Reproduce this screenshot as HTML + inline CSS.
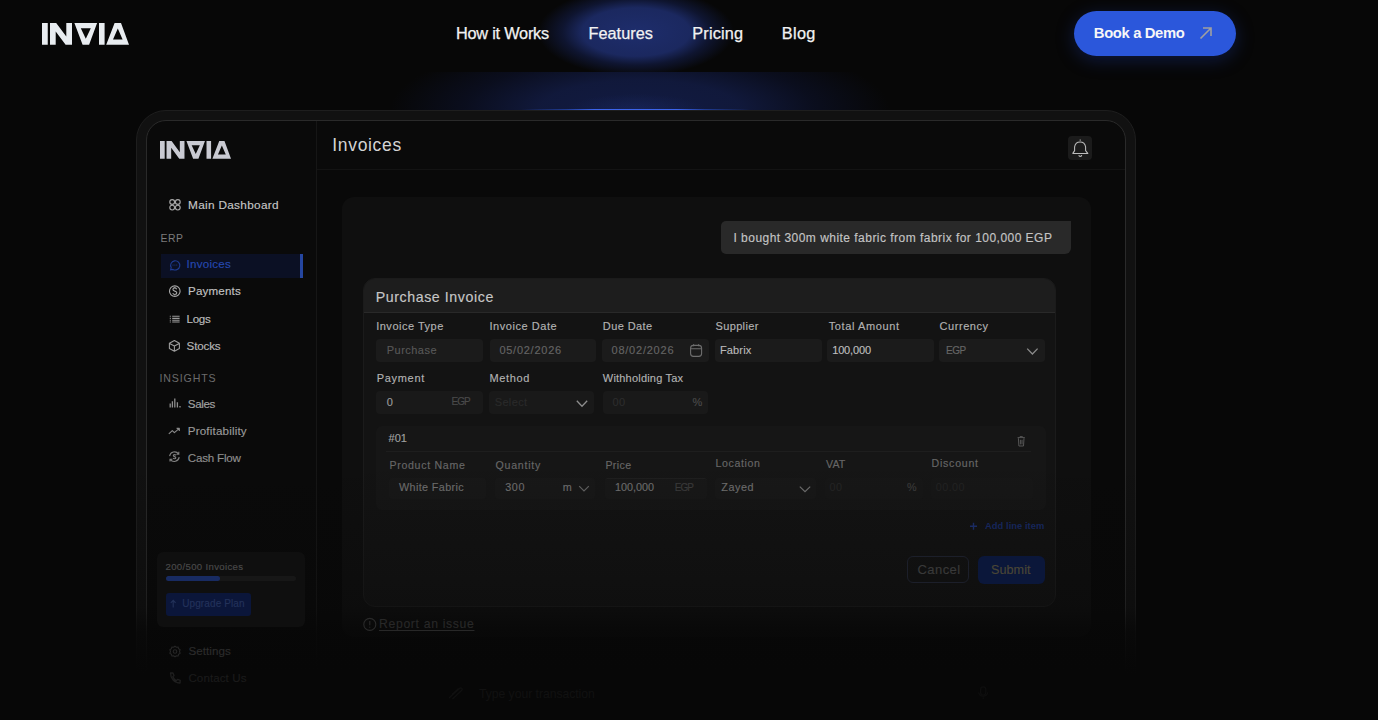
<!DOCTYPE html>
<html><head><meta charset="utf-8"><style>
html,body{margin:0;padding:0;}
body{width:1378px;height:720px;overflow:hidden;background:#070707;position:relative;font-family:"Liberation Sans", sans-serif;}
.a{position:absolute;box-sizing:border-box;}
.t{position:absolute;white-space:nowrap;-webkit-text-stroke:0.15px currentColor;}
svg{position:absolute;overflow:visible;}
</style></head><body>
<!-- glows -->
<div class="a" style="left:0;top:72px;width:1378px;height:38px;background:radial-gradient(ellipse 70px 16px at 636px 38px, rgba(45,70,170,0.18) 0%, rgba(45,70,170,0) 100%), radial-gradient(ellipse 250px 75px at 640px 38px, rgba(19,29,72,0.9) 0%, rgba(19,29,72,0.8) 40%, rgba(13,19,48,0.55) 70%, rgba(7,7,7,0) 100%);"></div>
<div class="a" style="left:0;top:0;width:1378px;height:72px;background:radial-gradient(ellipse 98px 44px at 636px 32px, rgba(30,45,108,1) 0%, rgba(28,42,100,0.95) 55%, rgba(18,27,66,0.7) 75%, rgba(7,7,7,0) 100%);"></div>
<div class="a" style="left:521px;top:109px;width:229px;height:2px;background:linear-gradient(to right, rgba(43,87,219,0), rgba(43,87,219,0.55) 20%, rgba(60,100,235,1) 32%, rgba(60,100,235,1) 68%, rgba(43,87,219,0.55) 80%, rgba(43,87,219,0));"></div>
<!-- logo -->
<svg style="left:42px;top:23px" width="87" height="22" viewBox="0 0 87 22"><path fill="#e8ecf0" fill-rule="evenodd" d="M0 0H5.75V21.8H0Z M8 0H14.2L24.3 13.6V0H30V21.8H23.6L13.7 8.4V21.8H8Z M32.4 0H55.1L47.1 21.8H40.6Z M38.8 5.2H48.8L43.8 15.8Z M57 0H62.6V21.8H57Z M72.6 0H79L87 21.8H64.2Z M75.8 5.6L71 16.4H80.6Z"/></svg>
<!-- button -->
<div class="a" style="left:1074px;top:11px;width:162px;height:45px;border-radius:23px;background:#2b57db;box-shadow:0 4px 18px rgba(30,60,170,0.35);"></div>
<svg style="left:1199px;top:26px" width="14" height="14" viewBox="0 0 14 14"><path d="M1.5 12.5L12 2M4 2H12V10" fill="none" stroke="#a0a0a0" stroke-width="1.6"/></svg>

<!-- frame -->
<div class="a" style="left:136px;top:110px;width:1000px;height:640px;border-radius:30px;background:#111111;border:1px solid #1e1e1e;"></div>
<div class="a" style="left:146px;top:120px;width:980px;height:620px;border-radius:20px;background:#0a0a0a;border:1px solid #2a2a2a;"></div>
<div class="a" style="left:316px;top:121px;width:1px;height:600px;background:#161616;"></div>
<div class="a" style="left:317px;top:169px;width:808px;height:1px;background:#131313;"></div>
<div class="a" style="left:317px;top:170px;width:808px;height:560px;background:#090909;"></div>
<!-- sidebar logo -->
<svg style="left:160px;top:141px" width="71" height="18" viewBox="0 0 87 22" preserveAspectRatio="none"><path fill="#c9cad2" fill-rule="evenodd" d="M0 0H5.75V21.8H0Z M8 0H14.2L24.3 13.6V0H30V21.8H23.6L13.7 8.4V21.8H8Z M32.4 0H55.1L47.1 21.8H40.6Z M38.8 5.2H48.8L43.8 15.8Z M57 0H62.6V21.8H57Z M72.6 0H79L87 21.8H64.2Z M75.8 5.6L71 16.4H80.6Z"/></svg>
<!-- active row -->
<div class="a" style="left:161px;top:254px;width:141px;height:24px;background:#0b1024;"></div>
<div class="a" style="left:300px;top:254px;width:2.5px;height:24px;background:#2546a0;"></div>
<!-- bell -->
<div class="a" style="left:1068px;top:135.5px;width:24px;height:24px;border-radius:4px;background:#1b1b1b;"></div>

<!-- main card -->
<div class="a" style="left:342px;top:197px;width:749px;height:440px;border-radius:12px;background:#0f0f0f;"></div>
<!-- chat -->
<div class="a" style="left:721px;top:220.5px;width:350px;height:33.5px;border-radius:5px 0 6px 5px;background:#292929;"></div>
<!-- purchase card -->
<div class="a" style="left:363px;top:278px;width:693px;height:329px;border-radius:12px;background:#131313;overflow:hidden;border:1px solid #1b1b1b;">
  <div class="a" style="left:0;top:0;width:693px;height:34px;background:#1d1d1d;border-bottom:1px solid #292929;"></div>
</div>
<!-- inputs row1 -->
<div class="a" style="left:376.3px;top:339.4px;width:107px;height:23px;border-radius:4px;background:#1b1b1b;"></div>
<div class="a" style="left:490px;top:339.4px;width:105.7px;height:23px;border-radius:4px;background:#1b1b1b;"></div>
<div class="a" style="left:602px;top:339.4px;width:106.5px;height:23px;border-radius:4px;background:#1b1b1b;"></div>
<div class="a" style="left:715.2px;top:339.4px;width:107px;height:23px;border-radius:4px;background:#1b1b1b;"></div>
<div class="a" style="left:827px;top:339.4px;width:106.5px;height:23px;border-radius:4px;background:#1b1b1b;"></div>
<div class="a" style="left:939px;top:339.4px;width:106px;height:23px;border-radius:4px;background:#1b1b1b;"></div>
<!-- inputs row2 -->
<div class="a" style="left:376.3px;top:390.8px;width:106.3px;height:23.2px;border-radius:4px;background:#191919;"></div>
<div class="a" style="left:488.6px;top:390.8px;width:105.4px;height:23.2px;border-radius:4px;background:#191919;"></div>
<div class="a" style="left:602.8px;top:390.8px;width:105.2px;height:23.2px;border-radius:4px;background:#191919;"></div>
<!-- line item -->
<div class="a" style="left:376.3px;top:426px;width:670px;height:84px;border-radius:6px;background:#161616;"></div>
<div class="a" style="left:386px;top:450.5px;width:645px;height:1px;background:#1e1e1e;"></div>
<div class="a" style="left:388.5px;top:478.3px;width:97.5px;height:21px;border-radius:3px;background:#181818;"></div>
<div class="a" style="left:494.7px;top:478.3px;width:100.2px;height:21px;border-radius:3px;background:#181818;"></div>
<div class="a" style="left:604.6px;top:478.3px;width:102px;height:21px;border-radius:3px;background:#181818;border-top:1px solid #1f1f1f;"></div>
<div class="a" style="left:715px;top:478.3px;width:101.2px;height:21px;border-radius:3px;background:#181818;"></div>
<div class="a" style="left:825.2px;top:478.3px;width:97.6px;height:21px;border-radius:3px;background:#171717;"></div>
<div class="a" style="left:930.6px;top:478.3px;width:102.7px;height:21px;border-radius:3px;background:#171717;"></div>
<!-- bottom input -->

<div class="a" style="left:0;top:0;width:1378px;height:720px;background:linear-gradient(to bottom, rgba(7,7,7,0) 0px, rgba(7,7,7,0) 460px, rgba(7,7,7,0.2) 560px, rgba(7,7,7,0.32) 607px, rgba(7,7,7,0.8) 632px, rgba(7,7,7,0.95) 660px, rgba(7,7,7,1) 674px);"></div>
<!-- usage card -->
<div class="a" style="left:157px;top:552px;width:148px;height:75px;border-radius:6px;background:#0f0f0f;"></div>
<div class="a" style="left:165.5px;top:575.5px;width:130px;height:5.5px;border-radius:3px;background:#171717;"></div>
<div class="a" style="left:165.5px;top:575.5px;width:54px;height:5.5px;border-radius:3px;background:#182b62;"></div>
<div class="a" style="left:165.5px;top:593px;width:85px;height:22.5px;border-radius:3px;background:#0b163a;"></div>

<!-- buttons -->
<div class="a" style="left:907.2px;top:555.8px;width:62.3px;height:27.4px;border-radius:6px;border:1px solid #1c1f2a;"></div>
<div class="a" style="left:977.5px;top:556.4px;width:67.4px;height:27.2px;border-radius:6px;background:#0b173a;"></div>
<!-- sidebar icons -->
<svg style="left:0;top:0" width="1" height="1">
 <g fill="none" stroke="#a8a8a8" stroke-width="1.15">
  <circle cx="172.2" cy="202" r="2.4"/><circle cx="177.8" cy="202" r="2.4"/>
  <circle cx="172.2" cy="207.6" r="2.4"/><circle cx="177.8" cy="207.6" r="2.4"/>
 </g>
 <g fill="none" stroke="#1f3c92" stroke-width="1.1">
  <path d="M170.6 269.8 L171.2 267.6 A4.6 4.6 0 1 1 173 269.4 Z"/>
 </g>
 <g fill="#1f3c92"><circle cx="173" cy="265" r="0.55"/><circle cx="174.9" cy="265" r="0.55"/><circle cx="176.8" cy="265" r="0.55"/></g>
 <g fill="none" stroke="#a8a8a8" stroke-width="1.1">
  <circle cx="174.8" cy="291.2" r="5.3"/>
  <path d="M176.7 289.2 C176.3 288.2 175.6 287.9 174.8 287.9 C173.6 287.9 172.9 288.6 172.9 289.5 C172.9 291.6 176.8 290.6 176.8 292.8 C176.8 293.8 176 294.5 174.8 294.5 C173.8 294.5 173.1 294.1 172.8 293.2 M174.8 286.9 V287.9 M174.8 294.5 V295.5"/>
 </g>
 <g stroke="#9a9a9a" stroke-width="1.1">
  <path d="M172.2 316.2 H179.6 M172.2 318.4 H179.6 M172.2 320.2 H179.6 M172.2 322 H179.6"/>
  <path d="M169.8 316.2 H170.8 M169.8 318.4 H170.8 M169.8 320.2 H170.8 M169.8 322 H170.8"/>
 </g>
 <g fill="none" stroke="#9c9c9c" stroke-width="1.1" stroke-linejoin="round">
  <path d="M174.4 340.6 L179.4 343.3 V348.6 L174.4 351.2 L169.4 348.6 V343.3 Z M169.6 343.4 L174.4 346 L179.2 343.4 M174.4 346 V351"/>
 </g>
 <g stroke="#8e8e8e" stroke-width="1.3">
  <path d="M170.2 403.6 V407.4 M172.4 401.2 V407.4 M174.8 398.6 V407.4 M177.4 402.2 V407.4 M180 406 V407.4"/>
 </g>
 <g fill="none" stroke="#8a8a8a" stroke-width="1.15" stroke-linejoin="round">
  <path d="M168.8 433.8 L172.3 430.6 L174.4 432.6 L179 428.6 M176.6 428.4 H179.3 V431"/>
 </g>
 <g fill="none" stroke="#808080" stroke-width="1.1">
  <path d="M169.6 456.2 A5 5 0 0 1 178.6 454 M179.2 457.2 A5 5 0 0 1 170.2 459.4 M178.8 451.8 V454.2 H176.4 M170 461.6 V459.2 H172.4"/>
  <path d="M175.8 455.4 C175.6 454.8 175.1 454.6 174.5 454.6 C173.8 454.6 173.3 455 173.3 455.6 C173.3 456.9 175.8 456.3 175.8 457.7 C175.8 458.3 175.2 458.8 174.5 458.8 C173.9 458.8 173.4 458.5 173.2 458"/>
 </g>
 <!-- upgrade arrow -->
 <g fill="none" stroke="#23325a" stroke-width="1.1"><path d="M173.2 607.5 V600.5 M170.8 602.8 L173.2 600.4 L175.6 602.8"/></g>
 <!-- settings gear -->
 <g fill="none" stroke="#262626" stroke-width="1.1">
  <circle cx="175" cy="651.5" r="1.8"/>
  <path d="M175 646.2 L176.4 647.2 L178.1 647 L178.6 648.7 L180.1 649.8 L179.5 651.5 L180.1 653.2 L178.6 654.3 L178.1 656 L176.4 655.8 L175 656.8 L173.6 655.8 L171.9 656 L171.4 654.3 L169.9 653.2 L170.5 651.5 L169.9 649.8 L171.4 648.7 L171.9 647 L173.6 647.2 Z"/>
 </g>
 <!-- phone -->
 <g fill="none" stroke="#1f1f1f" stroke-width="1.3" stroke-linejoin="round"><path d="M170.5 673 C170.5 678.5 174.5 683 180 683 L180.2 680.4 L177.6 679.4 L176.4 680.6 C174.6 679.8 173.6 678.6 172.8 676.8 L174 675.6 L173 673 Z"/></g>

 <!-- bell -->
 <g fill="none" stroke="#bdbdbd" stroke-width="1.05" stroke-linejoin="round">
  <path d="M1072.8 153.4 H1087.8 L1085.6 150.6 V146.8 A5.6 5.8 0 0 0 1074.6 146.8 V150.6 Z"/>
  <path d="M1080.2 140.8 V139.6 M1078.9 155 A1.4 1.4 0 0 0 1081.7 155"/>
 </g>
 <!-- calendar -->
 <g fill="none" stroke="#6e6e6e" stroke-width="1.1">
  <rect x="690.6" y="345.4" width="11" height="11" rx="2.8"/>
  <path d="M690.8 348.8 H701.4 M693.6 344.2 V346.2 M698.6 344.2 V346.2"/>
 </g>
 <!-- chevrons -->
 <g fill="none" stroke="#8a8a8a" stroke-width="1.3"><path d="M1027.2 348.6 L1032.4 354 L1037.6 348.6"/></g>
 <g fill="none" stroke="#8e8e8e" stroke-width="1.3"><path d="M576.8 400.8 L582 406.2 L587.2 400.8"/></g>
 <g fill="none" stroke="#5e5e5e" stroke-width="1.2"><path d="M579.2 486.2 L584 491 L588.8 486.2"/></g>
 <g fill="none" stroke="#6a6a6a" stroke-width="1.2"><path d="M799.8 486.6 L805 491.6 L810.2 486.6"/></g>
 <!-- trash -->
 <g fill="none" stroke="#565656" stroke-width="1"><path d="M1017.6 437.6 H1024.8 M1020 437.6 V436.6 H1022.4 V437.6 M1018.4 438.2 L1018.9 446 H1023.5 L1024 438.2 M1020.4 439.8 V444.4 M1022 439.8 V444.4"/></g>
 <!-- plus -->
 <g stroke="#1a2b62" stroke-width="1.4"><path d="M970 526.2 H977 M973.5 522.7 V529.7"/></g>
 <!-- report icon -->
 <g fill="none" stroke="#2a2a2a" stroke-width="1.1"><circle cx="369.8" cy="624.4" r="6"/><path d="M369.8 621 V625.2 M369.8 626.8 V627.8"/></g>
 <!-- attach -->
 <g fill="none" stroke="#101010" stroke-width="1.3"><path d="M449 698 L459.5 688.5 C461 687 463 688.5 461.8 690.2 L452.5 699 M452 694.6 L458.6 688.6"/></g>
 <!-- mic -->
 <g fill="none" stroke="#0e0e0e" stroke-width="1.3"><rect x="980.6" y="686.8" width="5.2" height="8.4" rx="2.6"/><path d="M978.6 692.4 A4.7 4.7 0 0 0 987.8 692.4 M983.2 697.2 V699"/></g>
</svg>

<div class="t" style="left:456.00px;top:25.00px;font-size:16.3px;line-height:16.3px;color:#f2f2f2;font-weight:400;letter-spacing:-0.223px;-webkit-text-stroke:0.25px #f2f2f2;">How it Works</div>
<div class="t" style="left:588.50px;top:25.00px;font-size:16.3px;line-height:16.3px;color:#f2f2f2;font-weight:400;letter-spacing:0.013px;-webkit-text-stroke:0.25px #f2f2f2;">Features</div>
<div class="t" style="left:692.30px;top:25.00px;font-size:16.3px;line-height:16.3px;color:#f2f2f2;font-weight:400;letter-spacing:0.165px;-webkit-text-stroke:0.25px #f2f2f2;">Pricing</div>
<div class="t" style="left:781.80px;top:25.00px;font-size:16.3px;line-height:16.3px;color:#f2f2f2;font-weight:400;letter-spacing:0.323px;-webkit-text-stroke:0.25px #f2f2f2;">Blog</div>
<div class="t" style="left:1093.80px;top:26.27px;font-size:14.8px;line-height:14.8px;color:#f7f7f7;font-weight:700;letter-spacing:-0.352px;-webkit-text-stroke:0;">Book a Demo</div>
<div class="t" style="left:188.00px;top:200.31px;font-size:11.8px;line-height:11.8px;color:#c6c6c6;font-weight:400;letter-spacing:0.308px;">Main Dashboard</div>
<div class="t" style="left:160.40px;top:234.20px;font-size:10.4px;line-height:10.4px;color:#7c7c7c;font-weight:400;letter-spacing:0.583px;-webkit-text-stroke:0;">ERP</div>
<div class="t" style="left:186.60px;top:258.18px;font-size:11.6px;line-height:11.6px;color:#2648b0;font-weight:400;letter-spacing:0.238px;">Invoices</div>
<div class="t" style="left:188.00px;top:284.58px;font-size:11.6px;line-height:11.6px;color:#c2c2c2;font-weight:400;letter-spacing:0.178px;">Payments</div>
<div class="t" style="left:186.60px;top:313.08px;font-size:11.6px;line-height:11.6px;color:#bcbcbc;font-weight:400;letter-spacing:-0.315px;">Logs</div>
<div class="t" style="left:186.60px;top:340.18px;font-size:11.6px;line-height:11.6px;color:#b6b6b6;font-weight:400;letter-spacing:-0.159px;">Stocks</div>
<div class="t" style="left:159.40px;top:373.03px;font-size:10.6px;line-height:10.6px;color:#6c6c6c;font-weight:400;letter-spacing:0.891px;-webkit-text-stroke:0;">INSIGHTS</div>
<div class="t" style="left:187.80px;top:397.58px;font-size:11.6px;line-height:11.6px;color:#a2a2a2;font-weight:400;letter-spacing:-0.351px;">Sales</div>
<div class="t" style="left:187.80px;top:425.18px;font-size:11.6px;line-height:11.6px;color:#9a9a9a;font-weight:400;letter-spacing:0.175px;">Profitability</div>
<div class="t" style="left:187.80px;top:451.88px;font-size:11.6px;line-height:11.6px;color:#8e8e8e;font-weight:400;letter-spacing:-0.199px;">Cash Flow</div>
<div class="t" style="left:165.50px;top:561.87px;font-size:9.6px;line-height:9.6px;color:#4a4a4a;font-weight:400;letter-spacing:0.337px;">200/500 Invoices</div>
<div class="t" style="left:182.20px;top:599.33px;font-size:10px;line-height:10px;color:#23325a;font-weight:400;letter-spacing:0.110px;">Upgrade Plan</div>
<div class="t" style="left:188.40px;top:645.18px;font-size:11.6px;line-height:11.6px;color:#2c2c2c;font-weight:400;letter-spacing:0.072px;">Settings</div>
<div class="t" style="left:188.40px;top:672.18px;font-size:11.6px;line-height:11.6px;color:#1b1b1b;font-weight:400;letter-spacing:0.083px;">Contact Us</div>
<div class="t" style="left:332.30px;top:136.99px;font-size:17.5px;line-height:17.5px;color:#d4d4d4;font-weight:400;letter-spacing:0.665px;-webkit-text-stroke:0;">Invoices</div>
<div class="t" style="left:733.50px;top:231.84px;font-size:12px;line-height:12px;color:#c4c4c4;font-weight:400;letter-spacing:0.470px;">I bought 300m white fabric from fabrix for 100,000 EGP</div>
<div class="t" style="left:375.70px;top:290.38px;font-size:14.2px;line-height:14.2px;color:#c6c6c6;font-weight:400;letter-spacing:0.584px;">Purchase Invoice</div>
<div class="t" style="left:376.20px;top:321.19px;font-size:11px;line-height:11px;color:#b2b2b2;font-weight:400;letter-spacing:0.506px;">Invoice Type</div>
<div class="t" style="left:489.40px;top:321.19px;font-size:11px;line-height:11px;color:#b2b2b2;font-weight:400;letter-spacing:0.561px;">Invoice Date</div>
<div class="t" style="left:602.80px;top:321.19px;font-size:11px;line-height:11px;color:#b2b2b2;font-weight:400;letter-spacing:0.421px;">Due Date</div>
<div class="t" style="left:715.50px;top:321.19px;font-size:11px;line-height:11px;color:#b2b2b2;font-weight:400;letter-spacing:0.358px;">Supplier</div>
<div class="t" style="left:828.70px;top:321.19px;font-size:11px;line-height:11px;color:#b2b2b2;font-weight:400;letter-spacing:0.614px;">Total Amount</div>
<div class="t" style="left:939.60px;top:321.19px;font-size:11px;line-height:11px;color:#b2b2b2;font-weight:400;letter-spacing:0.554px;">Currency</div>
<div class="t" style="left:386.80px;top:345.19px;font-size:11px;line-height:11px;color:#585858;font-weight:400;letter-spacing:0.464px;">Purchase</div>
<div class="t" style="left:499.40px;top:345.19px;font-size:11px;line-height:11px;color:#646464;font-weight:400;letter-spacing:0.740px;">05/02/2026</div>
<div class="t" style="left:611.50px;top:345.19px;font-size:11px;line-height:11px;color:#646464;font-weight:400;letter-spacing:0.774px;">08/02/2026</div>
<div class="t" style="left:720.00px;top:345.19px;font-size:11px;line-height:11px;color:#bababa;font-weight:400;letter-spacing:0.128px;">Fabrix</div>
<div class="t" style="left:832.20px;top:345.19px;font-size:11px;line-height:11px;color:#bebebe;font-weight:400;letter-spacing:-0.157px;">100,000</div>
<div class="t" style="left:946.00px;top:346.04px;font-size:10px;line-height:10px;color:#666666;font-weight:400;letter-spacing:-0.424px;">EGP</div>
<div class="t" style="left:376.80px;top:373.19px;font-size:11px;line-height:11px;color:#b2b2b2;font-weight:400;letter-spacing:0.674px;">Payment</div>
<div class="t" style="left:489.50px;top:373.19px;font-size:11px;line-height:11px;color:#b2b2b2;font-weight:400;letter-spacing:0.626px;">Method</div>
<div class="t" style="left:602.80px;top:373.19px;font-size:11px;line-height:11px;color:#b2b2b2;font-weight:400;letter-spacing:0.204px;">Withholding Tax</div>
<div class="t" style="left:386.80px;top:396.59px;font-size:11px;line-height:11px;color:#9c9c9c;font-weight:400;letter-spacing:0.000px;">0</div>
<div class="t" style="left:451.60px;top:397.44px;font-size:10px;line-height:10px;color:#4a4a4a;font-weight:400;letter-spacing:-1.074px;">EGP</div>
<div class="t" style="left:494.70px;top:396.59px;font-size:11px;line-height:11px;color:#2a2a2a;font-weight:400;letter-spacing:0.357px;">Select</div>
<div class="t" style="left:612.40px;top:396.59px;font-size:11px;line-height:11px;color:#2d2d2d;font-weight:400;letter-spacing:0.482px;">00</div>
<div class="t" style="left:692.50px;top:396.59px;font-size:11px;line-height:11px;color:#4a4a4a;font-weight:400;letter-spacing:0.000px;">%</div>
<div class="t" style="left:388.50px;top:433.49px;font-size:11px;line-height:11px;color:#a0a0a0;font-weight:400;letter-spacing:0.032px;">#01</div>
<div class="t" style="left:389.40px;top:460.13px;font-size:10.6px;line-height:10.6px;color:#676767;font-weight:400;letter-spacing:0.707px;">Product Name</div>
<div class="t" style="left:495.60px;top:460.13px;font-size:10.6px;line-height:10.6px;color:#676767;font-weight:400;letter-spacing:0.735px;">Quantity</div>
<div class="t" style="left:605.40px;top:460.13px;font-size:10.6px;line-height:10.6px;color:#676767;font-weight:400;letter-spacing:0.389px;">Price</div>
<div class="t" style="left:715.50px;top:457.53px;font-size:10.6px;line-height:10.6px;color:#676767;font-weight:400;letter-spacing:0.620px;">Location</div>
<div class="t" style="left:826.00px;top:458.53px;font-size:10.6px;line-height:10.6px;color:#676767;font-weight:400;letter-spacing:0.121px;">VAT</div>
<div class="t" style="left:931.50px;top:457.53px;font-size:10.6px;line-height:10.6px;color:#676767;font-weight:400;letter-spacing:0.761px;">Discount</div>
<div class="t" style="left:399.00px;top:482.16px;font-size:10.8px;line-height:10.8px;color:#6a6a6a;font-weight:400;letter-spacing:0.373px;">White Fabric</div>
<div class="t" style="left:505.20px;top:482.16px;font-size:10.8px;line-height:10.8px;color:#6a6a6a;font-weight:400;letter-spacing:0.595px;">300</div>
<div class="t" style="left:562.70px;top:482.16px;font-size:10.8px;line-height:10.8px;color:#6a6a6a;font-weight:400;letter-spacing:0.000px;">m</div>
<div class="t" style="left:615.00px;top:482.16px;font-size:10.8px;line-height:10.8px;color:#6a6a6a;font-weight:400;letter-spacing:-0.021px;">100,000</div>
<div class="t" style="left:674.80px;top:482.84px;font-size:10px;line-height:10px;color:#393939;font-weight:400;letter-spacing:-0.974px;">EGP</div>
<div class="t" style="left:721.30px;top:482.16px;font-size:10.8px;line-height:10.8px;color:#6a6a6a;font-weight:400;letter-spacing:0.549px;">Zayed</div>
<div class="t" style="left:829.60px;top:482.16px;font-size:10.8px;line-height:10.8px;color:#242424;font-weight:400;letter-spacing:0.395px;">00</div>
<div class="t" style="left:907.00px;top:482.16px;font-size:10.8px;line-height:10.8px;color:#3a3a3a;font-weight:400;letter-spacing:0.000px;">%</div>
<div class="t" style="left:935.80px;top:482.16px;font-size:10.8px;line-height:10.8px;color:#222222;font-weight:400;letter-spacing:0.422px;">00.00</div>
<div class="t" style="left:985.00px;top:521.34px;font-size:9.4px;line-height:9.4px;color:#16265a;font-weight:700;letter-spacing:0.040px;-webkit-text-stroke:0;">Add line item</div>
<div class="t" style="left:917.50px;top:563.00px;font-size:13px;line-height:13px;color:#393939;font-weight:400;letter-spacing:0.444px;">Cancel</div>
<div class="t" style="left:991.00px;top:563.83px;font-size:12.6px;line-height:12.6px;color:#4a4636;font-weight:400;letter-spacing:0.061px;">Submit</div>
<div class="t" style="left:379.00px;top:618.07px;font-size:12.2px;line-height:12.2px;color:#282828;font-weight:400;letter-spacing:0.673px;text-decoration:underline;text-underline-offset:2px;">Report an issue</div>
<div class="t" style="left:479.00px;top:688.17px;font-size:12.2px;line-height:12.2px;color:#111111;font-weight:400;letter-spacing:-0.037px;">Type your transaction</div>
</body></html>
